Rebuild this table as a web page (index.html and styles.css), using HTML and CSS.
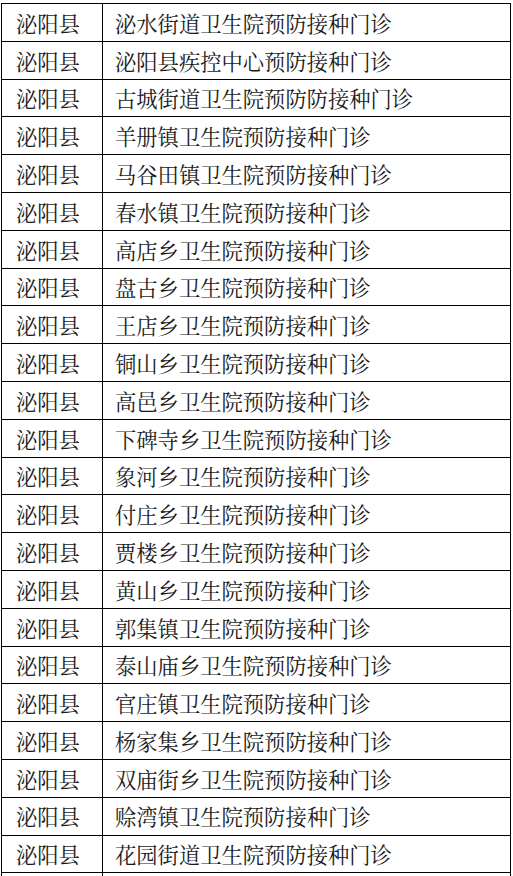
FILE: index.html
```html
<!DOCTYPE html>
<html lang="zh-CN">
<head>
<meta charset="utf-8">
<title>泌阳县预防接种门诊</title>
<link rel="stylesheet" href="styles.css">
</head>
<body>
<table class="clinics">
<tbody>
<tr><td class="county">泌阳县</td><td class="name">泌水街道卫生院预防接种门诊</td></tr>
<tr><td class="county">泌阳县</td><td class="name">泌阳县疾控中心预防接种门诊</td></tr>
<tr><td class="county">泌阳县</td><td class="name">古城街道卫生院预防防接种门诊</td></tr>
<tr><td class="county">泌阳县</td><td class="name">羊册镇卫生院预防接种门诊</td></tr>
<tr><td class="county">泌阳县</td><td class="name">马谷田镇卫生院预防接种门诊</td></tr>
<tr><td class="county">泌阳县</td><td class="name">春水镇卫生院预防接种门诊</td></tr>
<tr><td class="county">泌阳县</td><td class="name">高店乡卫生院预防接种门诊</td></tr>
<tr><td class="county">泌阳县</td><td class="name">盘古乡卫生院预防接种门诊</td></tr>
<tr><td class="county">泌阳县</td><td class="name">王店乡卫生院预防接种门诊</td></tr>
<tr><td class="county">泌阳县</td><td class="name">铜山乡卫生院预防接种门诊</td></tr>
<tr><td class="county">泌阳县</td><td class="name">高邑乡卫生院预防接种门诊</td></tr>
<tr><td class="county">泌阳县</td><td class="name">下碑寺乡卫生院预防接种门诊</td></tr>
<tr><td class="county">泌阳县</td><td class="name">象河乡卫生院预防接种门诊</td></tr>
<tr><td class="county">泌阳县</td><td class="name">付庄乡卫生院预防接种门诊</td></tr>
<tr><td class="county">泌阳县</td><td class="name">贾楼乡卫生院预防接种门诊</td></tr>
<tr><td class="county">泌阳县</td><td class="name">黄山乡卫生院预防接种门诊</td></tr>
<tr><td class="county">泌阳县</td><td class="name">郭集镇卫生院预防接种门诊</td></tr>
<tr><td class="county">泌阳县</td><td class="name">泰山庙乡卫生院预防接种门诊</td></tr>
<tr><td class="county">泌阳县</td><td class="name">官庄镇卫生院预防接种门诊</td></tr>
<tr><td class="county">泌阳县</td><td class="name">杨家集乡卫生院预防接种门诊</td></tr>
<tr><td class="county">泌阳县</td><td class="name">双庙街乡卫生院预防接种门诊</td></tr>
<tr><td class="county">泌阳县</td><td class="name">赊湾镇卫生院预防接种门诊</td></tr>
<tr><td class="county">泌阳县</td><td class="name">花园街道卫生院预防接种门诊</td></tr>
<tr><td class="county"></td><td class="name"></td></tr>
</tbody>
</table>
</body>
</html>
```

FILE: styles.css
```css
html, body {
  margin: 0;
  padding: 0;
  background: #fff;
}

body {
  padding: 3px 0 0 1px;
  overflow: hidden;
  height: 876px;
  box-sizing: border-box;
}

.clinics {
  border-collapse: collapse;
  width: 510px;
  table-layout: fixed;
  font-family: "Noto Serif CJK SC", "Noto Sans CJK SC", serif;
  font-size: 21.3px;
  color: #1a1a1a;
}

.clinics tr {
  height: 37.8px;
}

.clinics td {
  border: 1px solid #000;
  padding: 0 0 0 13px;
  line-height: 1;
  vertical-align: middle;
  white-space: nowrap;
}

.clinics .county {
  width: 86px;
  padding-left: 14px;
}

.clinics .name {
  padding-left: 12px;
}
```
